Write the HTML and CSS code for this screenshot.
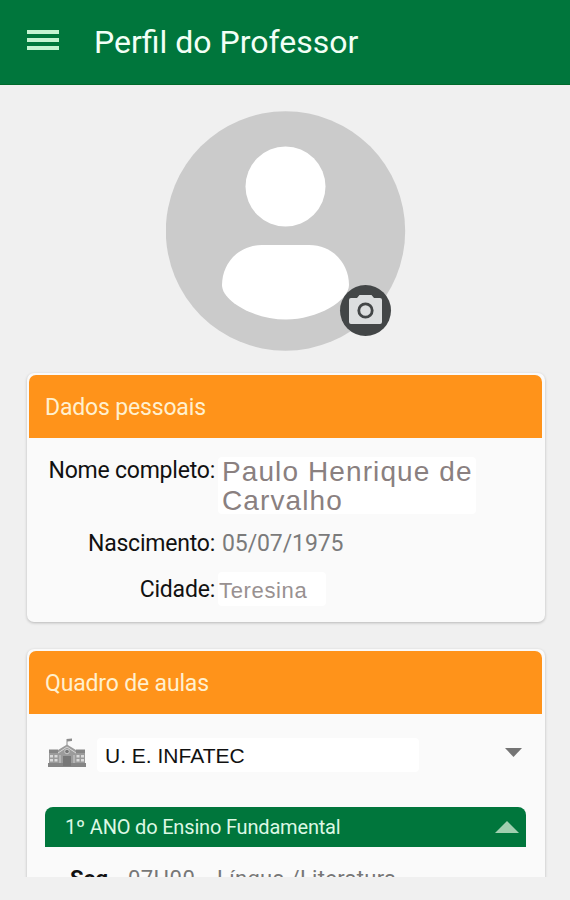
FILE: index.html
```html
<!DOCTYPE html>
<html lang="pt-BR">
<head>
  <meta charset="UTF-8" />
  <title>Perfil do Professor</title>
  <link rel="stylesheet" href="styles.css">
</head>
<body>

  <!-- top bar -->
  <header class="topbar">
    <div class="menu"><span></span><span></span><span></span></div>
    <h1>Perfil do Professor</h1>
  </header>

  <main class="content">

    <!-- profile photo -->
    <div class="avatar">
      <svg width="240" height="240" viewBox="0 0 240 240">
        <circle cx="119.500" cy="120" r="119.700" fill="#cbcbcb"/>
        <circle cx="119.500" cy="75.500" r="40" fill="#fff"/>
        <path d="M96 134H143C168 134 183 154 183 174C183 190 151 208.500 120 208.500C88 208.500 56 190 56 174C56 154 71 134 96 134Z" fill="#fff"/>
      </svg>
      <button class="camera">
        <svg width="51" height="51" viewBox="0 0 51 51">
          <path d="M11 13H17L19.500 10H31.500L34 13H40Q42 13 42 15V37Q42 39 40 39H11Q9 39 9 37V15Q9 13 11 13Z" fill="#dcdedf"/>
          <circle cx="25.500" cy="25.500" r="6.700" fill="none" stroke="#434647" stroke-width="2.800"/>
        </svg>
      </button>
    </div>

    <!-- personal data -->
    <section class="card">
      <h2>Dados pessoais</h2>
      <div class="fields">
        <div class="label">Nome completo:</div>
        <div class="value name">Paulo Henrique de<br>Carvalho</div>
        <div class="label">Nascimento:</div>
        <div class="value date">05/07/1975</div>
        <div class="label">Cidade:</div>
        <div class="value city">Teresina</div>
      </div>
    </section>

    <!-- classes -->
    <section class="card classes">
      <h2>Quadro de aulas</h2>
      <div class="school">
        <svg class="school-icon" width="40" height="30" viewBox="0 0 40 30">
          <path d="M19.500 1L25 .5V3L20.500 3.500V8H19.500Z" fill="#8d8d8d"/>
          <path d="M2 12H11L20 6.500L29 12H38V25H2Z" fill="#9b9b9b"/>
          <path d="M2 11.500H11V15H2ZM29 11.500H38V15H29ZM1 25H39V29H1Z" fill="#858585"/>
          <path d="M11 15L20 9L29 15" fill="none" stroke="#d8d8d8" stroke-width="1"/>
          <circle cx="20" cy="13.500" r="2.300" fill="#777" stroke="#ccc"/>
          <path d="M3 17H6V19.500H3ZM7.500 17H10.500V19.500H7.500ZM29.500 17H32.500V19.500H29.500ZM34 17H37V19.500H34ZM3 21H6V23.500H3ZM7.500 21H10.500V23.500H7.500ZM29.500 21H32.500V23.500H29.500ZM34 21H37V23.500H34Z" fill="#dadada"/>
          <path d="M12.500 17H13.500V25H12.500ZM26.500 17H27.500V25H26.500Z" fill="#cfcfcf"/>
          <path d="M16 18H24V28H16Z" fill="#777"/>
        </svg>
        <div class="school-name">U. E. INFATEC</div>
        <svg class="down" width="17" height="9" viewBox="0 0 17 9"><path d="M0 0H17L8.500 9Z" fill="#747474"/></svg>
      </div>
      <div class="grade">
        <span>1º ANO do Ensino Fundamental</span>
        <svg width="24" height="12" viewBox="0 0 24 12"><path d="M0 12L12 0L24 12Z" fill="#a0cfaf"/></svg>
      </div>
      <div class="lesson">
        <b>Seg</b>
        <span class="hour">07H00</span>
        <span>-</span>
        <span class="subject">Língua /Literatura</span>
      </div>
    </section>

  </main>

</body>
</html>
```

FILE: styles.css
```css
* {
  box-sizing: border-box;
}

body {
  margin: 0;
  height: 900px;
  overflow: hidden;
  background: #f0f0f0;
  font-family: Roboto, "Liberation Sans", sans-serif;
  color: #111;
}

h1, h2 {
  margin: 0;
  font-weight: 400;
}

.topbar {
  display: flex;
  align-items: center;
  gap: 35px;
  height: 85px;
  padding: 0 27px;
  background: #00763c;
  border-bottom: 1px solid #006a2c;
  color: #f2fff6;
}

.topbar h1 {
  font-size: 32px;
  line-height: 84px;
}

.menu {
  display: flex;
  flex-direction: column;
  gap: 4px;
  width: 32px;
  margin-top: -4px;
}

.menu span {
  height: 4px;
  background: #c5f3d2;
}

.content {
  height: 792px;
  padding: 26px 25px 0 27px;
  overflow: hidden;
}

.avatar {
  position: relative;
  width: 240px;
  height: 240px;
  margin: 0 0 22px 139px;
}

.avatar svg {
  display: block;
}

.camera {
  position: absolute;
  right: 15px;
  bottom: 15px;
  width: 51px;
  height: 51px;
  padding: 0;
  border: none;
  border-radius: 50%;
  background: #434647;
}

.card {
  height: 249px;
  margin-bottom: 27px;
  padding: 2px 3px 0 2px;
  background: #fafafa;
  border-radius: 7px;
  box-shadow: 0 1px 3px rgba(0,0,0,.24);
}

.card h2 {
  height: 63px;
  padding: 1px 16px 0;
  background: #ff931a;
  border-radius: 7px 7px 0 0;
  color: #fff0cf;
  font-size: 23px;
  line-height: 63px;
  letter-spacing: -.17px;
}

.fields {
  display: grid;
  grid-template-columns: 186px auto;
  grid-template-rows: 57px 26px 34px;
  row-gap: 16px;
  column-gap: 3px;
  padding-top: 19px;
}

.label {
  padding-top: 1px;
  font-size: 23px;
  line-height: 26px;
  letter-spacing: -.22px;
  text-align: right;
}

.label:nth-child(5) {
  line-height: 34px;
}

.value {
  justify-self: start;
  color: #7b7b7b;
}

.name {
  width: 258px;
  padding-left: 4px;
  background: #fff;
  border-radius: 4px;
  color: #8a8080;
  font: 28px/29px "Liberation Sans", sans-serif;
  letter-spacing: 1.1px;
  white-space: nowrap;
}

.date {
  padding: 1px 0 0 4px;
  font-size: 23px;
  line-height: 26px;
  letter-spacing: -.1px;
}

.city {
  width: 108px;
  padding-left: 1px;
  background: #fff;
  border-radius: 4px;
  color: #999191;
  font: 22px/37px "Liberation Sans", sans-serif;
  letter-spacing: .65px;
}

.classes {
  height: 260px;
  margin-bottom: 0;
}

.school {
  display: flex;
  align-items: center;
  height: 34px;
  margin: 24px 20px 35px 18px;
}

.school-icon {
  margin-top: -4px;
}

.school-name {
  width: 322px;
  height: 34px;
  margin-left: 10px;
  padding-left: 8px;
  background: #fff;
  border-radius: 4px;
  color: #111;
  font: 21px/35px "Liberation Sans", sans-serif;
}

.down {
  margin: -6px 0 0 auto;
}

.grade {
  display: flex;
  align-items: center;
  justify-content: space-between;
  height: 40px;
  margin: 0 16px;
  padding: 0 7px 0 20px;
  background: #00763c;
  border-radius: 8px 8px 0 0;
  color: #dcf8e4;
  font-size: 20px;
  letter-spacing: -.18px;
}

.lesson {
  display: flex;
  padding: 19px 0 0 41px;
  font-size: 22px;
  line-height: 26px;
  color: #777;
}

.lesson b {
  width: 58px;
  color: #111;
}

.hour {
  width: 75px;
  letter-spacing: .4px;
}

.subject {
  margin-left: 8px;
  letter-spacing: .3px;
}
```
